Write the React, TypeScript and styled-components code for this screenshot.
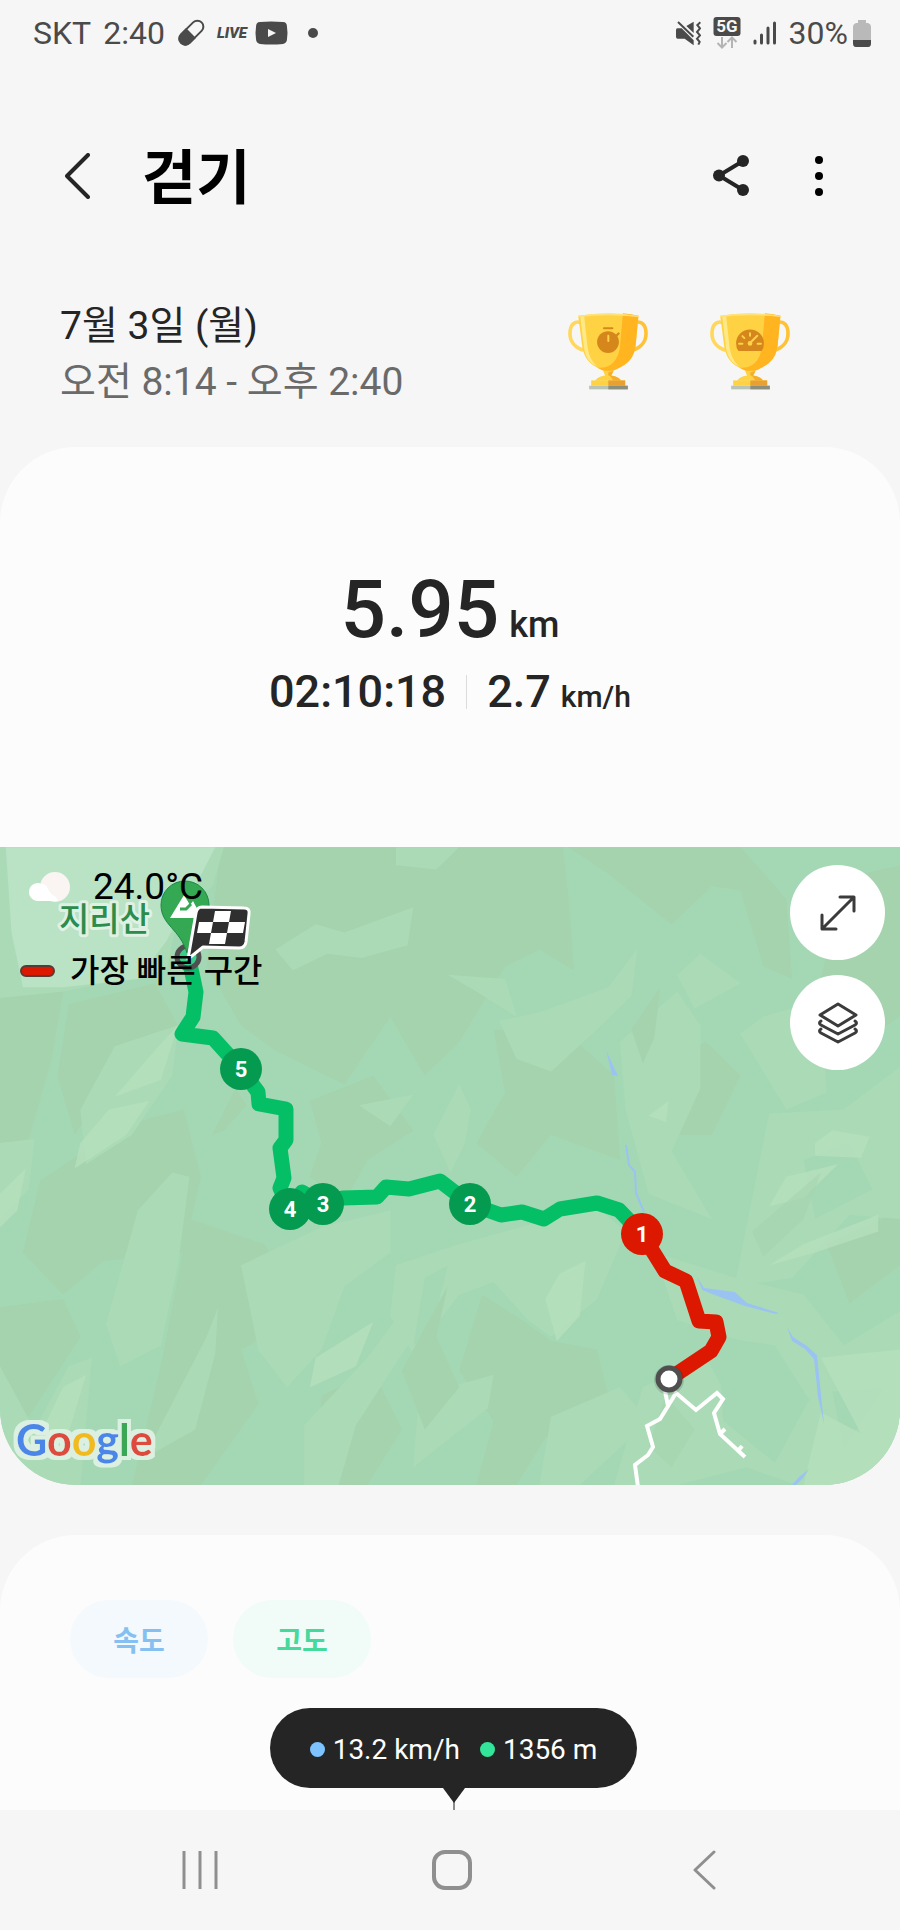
import React from 'react';
import styled, { createGlobalStyle } from 'styled-components';

const ink = '#252525';
const statusInk = '#4a4a4a';
const navInk = '#8f8f8f';

const GlobalStyle = createGlobalStyle`
  *, *::before, *::after { box-sizing: border-box; }
  body {
    margin: 0;
    background: #f6f6f6;
    color: ${ink};
    font-family: Roboto, 'Noto Sans CJK KR', sans-serif;
  }
  h1, p { margin: 0; }
  svg { display: block; flex: none; }
`;

const Screen = styled.div`
  display: flex;
  flex-direction: column;
  min-height: 100vh;
`;

const StatusBar = styled.div`
  display: flex;
  align-items: center;
  justify-content: space-between;
  height: 66px;
  padding: 0 29px 0 33px;
  color: ${statusInk};
  font-size: 32px;
  line-height: 40px;
`;

const StatusGroup = styled.div<{ $gap: number }>`
  display: flex;
  align-items: center;
  gap: ${(p) => p.$gap}px;
`;

const LiveTag = styled.span`
  font-size: 15px;
  font-weight: 900;
  font-style: italic;
  line-height: 20px;
`;

const MoreDot = styled.span`
  width: 10px;
  height: 10px;
  margin-left: 8px;
  border-radius: 50%;
  background: ${statusInk};
`;

const Header = styled.header`
  display: flex;
  align-items: center;
  height: 144px;
  margin-top: 38px;
  padding: 0 57px 0 53px;
`;

const IconButton = styled.button`
  display: flex;
  align-items: center;
  justify-content: center;
  width: 48px;
  height: 56px;
  padding: 0;
  border: 0;
  background: none;
  color: inherit;
  cursor: pointer;
`;

const Title = styled.h1`
  flex: 1;
  margin-left: 41px;
  padding-top: 6px;
  color: #000;
  font-size: 59px;
  font-weight: 700;
  line-height: 72px;
`;

const HeaderActions = styled.div`
  display: flex;
  gap: 40px;
`;

const SessionInfo = styled.section`
  display: flex;
  align-items: flex-start;
  justify-content: space-between;
  margin-top: 50px;
  padding: 0 110px 37px 60px;
`;

const InfoLine = styled.p<{ $muted?: boolean }>`
  color: ${(p) => (p.$muted ? '#6a6a6a' : ink)};
  font-size: 39px;
  line-height: 56px;
`;

const Trophies = styled.div`
  display: flex;
  gap: 62px;
  padding-top: 13px;
`;

const Card = styled.section`
  overflow: hidden;
  border-radius: 76px;
  background: #fcfcfc;
`;

const Summary = styled.div`
  display: flex;
  flex-direction: column;
  align-items: center;
  gap: 12px;
  padding: 119px 24px 129px;
  font-weight: 500;
`;

const Distance = styled.p`
  font-size: 80px;
  line-height: 88px;
`;

const MetricRow = styled.div`
  display: flex;
  align-items: center;
  gap: 20px;
  font-size: 45px;
  line-height: 52px;
`;

const Unit = styled.span<{ $size: number }>`
  margin-left: 10px;
  font-size: ${(p) => p.$size}px;
  line-height: 1;
`;

const Divider = styled.span`
  width: 1px;
  height: 34px;
  background: #dcdcdc;
`;

const MapPanel = styled.div`
  position: relative;
  height: 638px;
  overflow: hidden;
  background: #a4d8b5;
`;

const MapDrawing = styled.svg`
  width: 100%;
  height: 100%;
`;

const MapOverlay = styled.div`
  position: absolute;
  top: 18px;
  left: 20px;
  color: #000;
`;

const Weather = styled.div`
  display: flex;
  align-items: center;
  gap: 23px;
  height: 44px;
  padding-left: 7px;
  font-size: 37px;
  line-height: 36px;
`;

const Legend = styled.div`
  display: flex;
  align-items: center;
  gap: 15px;
  margin-top: 40px;
  font-size: 32px;
  font-weight: 500;
  line-height: 44px;
`;

const LegendSwatch = styled.span`
  width: 35px;
  height: 12px;
  border: 2px solid #5a3a34;
  border-radius: 6px;
  background: #dc1900;
`;

const MapControls = styled.div`
  position: absolute;
  top: 18px;
  right: 15px;
  display: flex;
  flex-direction: column;
  gap: 15px;
`;

const RoundButton = styled.button`
  display: flex;
  align-items: center;
  justify-content: center;
  width: 95px;
  height: 95px;
  padding: 0;
  border: 0;
  border-radius: 50%;
  background: #fff;
  cursor: pointer;
`;

const ChartCard = styled.section`
  display: flex;
  flex: 1;
  flex-direction: column;
  margin-top: 50px;
  padding-top: 65px;
  border-radius: 76px 76px 0 0;
  background: #fcfcfc;
`;

const Chips = styled.div`
  display: flex;
  gap: 25px;
  padding: 0 70px;
`;

const Chip = styled.button<{ $color: string; $tint: string }>`
  width: 138px;
  height: 78px;
  padding: 0;
  border: 0;
  border-radius: 39px;
  background: ${(p) => p.$tint};
  color: ${(p) => p.$color};
  font-family: inherit;
  font-size: 28px;
  font-weight: 700;
  cursor: pointer;
`;

const CursorMark = styled.div`
  display: flex;
  flex-direction: column;
  align-items: center;
  margin-top: 30px;
  padding-left: 7px;
`;

const Tooltip = styled.div`
  display: flex;
  align-items: center;
  gap: 20px;
  height: 80px;
  padding: 3px 40px 0;
  border-radius: 40px;
  background: ${ink};
  color: #fff;
  font-size: 28px;
  line-height: 32px;
`;

const Reading = styled.span<{ $dot: string }>`
  display: flex;
  align-items: center;
  gap: 8px;

  &::before {
    content: '';
    width: 15px;
    height: 15px;
    border-radius: 50%;
    background: ${(p) => p.$dot};
  }
`;

const NavBar = styled.nav`
  display: grid;
  grid-template-columns: repeat(3, 1fr);
  justify-items: center;
  align-items: center;
  height: 120px;
  padding: 0 70px 0 74px;
  color: ${navInk};
`;

const PillIcon = () => (
  <svg width="28" height="28" viewBox="0 0 28 28">
    <g transform="rotate(45 14 14)">
      <rect x="8" y="-1" width="12" height="29" rx="6" fill="none" stroke={statusInk} strokeWidth="2" />
      <path d="M7 14h14v8a7 7 0 0 1-14 0z" fill={statusInk} />
    </g>
  </svg>
);

const VideoIcon = () => (
  <svg width="33" height="24" viewBox="0 0 33 24">
    <path d="M5 1Q16 0 28 1Q32 1 32 6Q33 12 32 18Q32 22 28 23Q16 24 5 23Q1 22 1 18Q0 12 1 6Q1 1 5 1z" fill={statusInk} />
    <path d="M13 8l8 4-8 4z" fill="#f6f6f6" />
  </svg>
);

const MuteIcon = () => (
  <svg width="25" height="25" viewBox="0 0 75 75">
    <path d="M4 22H17L53 58V73L26 53H5Q0 53 0 47V28Q0 22 4 22zM31 15L53 2V36z" fill={statusInk} />
    <path d="M6 3L52 47" stroke={statusInk} strokeWidth="6" />
    <path d="M73 4l-9 8 8 10-9 11 9 10-9 10 8 10-4 8" fill="none" stroke={statusInk} strokeWidth="6" />
  </svg>
);

const NetworkIcon = () => (
  <svg width="28" height="32" viewBox="0 0 28 32">
    <rect x="0.500" y="0" width="27" height="19" rx="3" fill={statusInk} />
    <text x="14" y="15" textAnchor="middle" fontSize="17" fontWeight="700" fill="#f6f6f6">5G</text>
    <path d="M9 20v10M4.500 26L9 30.500 13.500 26M19 31V21M14.500 25L19 20.500 23.500 25" fill="none" stroke="#b4b4b4" strokeWidth="2" />
  </svg>
);

const SignalIcon = () => (
  <svg width="24" height="26" viewBox="0 0 24 26" stroke={statusInk} strokeWidth="3" strokeLinecap="round">
    <path d="M2 21v2M8.500 15v8M15 8v15M21.500 3v20" />
  </svg>
);

const BatteryIcon = () => (
  <svg width="18" height="27" viewBox="0 0 18 27">
    <path d="M5 0h8v3h2q3 1 3 4v16q0 4-3 4H3q-3 0-3-4V7q0-3 3-4h2z" fill="#b9b9b9" />
    <path d="M0 20h18v3q0 4-3 4H3q-3 0-3-4z" fill={statusInk} />
  </svg>
);

const Chevron = ({ width, height, stroke }: { width: number; height: number; stroke: number }) => (
  <svg width={width} height={height} viewBox={`0 0 ${width} ${height}`}>
    <path
      d={`M${width - 2} 2L2 ${height / 2}L${width - 2} ${height - 2}`}
      fill="none"
      stroke="currentColor"
      strokeWidth={stroke}
      strokeLinecap="round"
      strokeLinejoin="round"
    />
  </svg>
);

const ShareIcon = () => (
  <svg width="36" height="42" viewBox="0 0 36 42">
    <path d="M30 6L6 20.500L30 35" fill="none" stroke={ink} strokeWidth="4" />
    <circle cx="30" cy="6" r="6" fill={ink} />
    <circle cx="6" cy="20.500" r="6" fill={ink} />
    <circle cx="30" cy="35" r="6" fill={ink} />
  </svg>
);

const MoreIcon = () => (
  <svg width="8" height="40" viewBox="0 0 8 40">
    <circle cx="4" cy="4" r="4" />
    <circle cx="4" cy="20" r="4" />
    <circle cx="4" cy="36" r="4" />
  </svg>
);

const StopwatchMark = () => (
  <g>
    <rect x="106" y="49" width="31" height="6" rx="2" fill="#d5871c" />
    <path d="M144 77l9-9" stroke="#d5871c" strokeWidth="7" strokeLinecap="round" />
    <circle cx="121" cy="94" r="33" fill="#d5871c" />
    <path d="M122 75v16" stroke="#ffd24a" strokeWidth="6" strokeLinecap="round" />
  </g>
);

const GaugeMark = () => (
  <g>
    <path d="M86 121Q79 113 79 98A42 42 0 0 1 163 98Q163 113 156 121z" fill="#d5871c" />
    <path d="M121 67v8M98 76l6 6M88 99h10M144 99h10M121 97l22-22" stroke="#ffd24a" strokeWidth="6" strokeLinecap="round" />
    <circle cx="121" cy="98" r="7" fill="#ffd24a" />
  </g>
);

const Trophy = ({ label, children }: { label: string; children: React.ReactNode }) => (
  <svg width="80" height="80" viewBox="0 0 242 242" role="img" aria-label={label}>
    <path d="M38 35C18 28 6 45 6 68C6 94 24 112 48 119" fill="none" stroke="#ffd75c" strokeWidth="11" />
    <path d="M204 35C224 28 236 45 236 68C236 94 218 112 194 119" fill="none" stroke="#ffc234" strokeWidth="11" />
    <path d="M31 14Q122 1 213 14L205 100C201 150 172 168 122 186C72 168 48 150 42 100z" fill="#ffd244" />
    <path d="M166 7Q192 9 213 14L205 100C201 150 172 168 122 186Q104 180 88 171C134 178 156 140 158 100z" fill="#ffb420" />
    <path d="M37 17L49 15L58 100C61 130 68 148 88 168C58 154 50 130 47 100z" fill="#ffe886" />
    <path d="M31 14Q122 1 213 14L213 18Q122 7 31 18z" fill="#ffe27c" />
    <path d="M106 181h32l-6 14q24 4 29 16H82q6-12 30-16z" fill="#ffd244" />
    <path d="M122 186l16-5-8 14q24 4 31 16h-24q-8-16-15-16z" fill="#f5ad2c" />
    <rect x="70" y="210" width="103" height="16" fill="#ffd244" />
    <rect x="122" y="210" width="51" height="16" fill="#e8a034" />
    <rect x="64" y="226" width="117" height="11" fill="#b9c3b6" />
    <rect x="122" y="226" width="59" height="11" fill="#8b8f7c" />
    {children}
  </svg>
);

const CloudIcon = () => (
  <svg width="43" height="30" viewBox="0 0 43 30">
    <circle cx="28" cy="15" r="15" fill="#faf5f2" />
    <path d="M10 29a9 9 0 1 1 5-17q4 0 6 5t8 8l2 4z" fill="#fff" />
  </svg>
);

const ExpandIcon = () => (
  <svg width="36" height="36" viewBox="0 0 36 36" fill="none" stroke="#3b3b3b" strokeWidth="3" strokeLinecap="round" strokeLinejoin="round">
    <path d="M3 33L33 3M20 2H34V16M2 20V34H16" />
  </svg>
);

const LayersIcon = () => (
  <svg width="42" height="42" viewBox="0 0 42 42" fill="none" stroke="#3b3b3b" strokeWidth="3" strokeLinejoin="round" strokeLinecap="round">
    <path d="M21 2L39 13L21 24L3 13z" />
    <path d="M4 19q-3 2 0 4L21 32L38 23q3-2 0-4" />
    <path d="M4 27q-3 2 0 4L21 40L38 31q3-2 0-4" />
  </svg>
);

const kmMarkers = [
  { n: 5, x: 241, y: 222, color: '#049b51' },
  { n: 4, x: 290, y: 362, color: '#049b51' },
  { n: 3, x: 323, y: 357, color: '#049b51' },
  { n: 2, x: 470, y: 357, color: '#049b51' },
  { n: 1, x: 642, y: 387, color: '#dc1900' },
];

const shade = '#a4d3ad';
const meadow = '#abdbb6';
const light = '#b6e0bd';
const water = '#9bc3f2';

const Terrain = () => (
  <g transform="translate(0 -7) scale(.574 .421)">
    <g fill={shade}>
      <path d="M385 17H980L990 130 1000 310 940 260 880 300 800 480 740 560 680 420 600 580 480 500 420 440 360 300z" />
      <path d="M990 17H1290L1370 140 1380 330 1330 300 1290 120 1240 110 1170 200 1060 80z" />
      <path d="M0 370L110 360 90 520 40 760 0 800z" />
      <path d="M120 390L270 340 310 440 220 520 130 700 100 560z" />
      <path d="M540 620L650 560 720 690 640 760 600 860 540 800 560 720z" />
      <path d="M860 450L990 460 1070 560 1080 760 960 700 900 800 830 720 880 600z" />
      <path d="M70 810L210 680 320 640 350 800 320 980 180 1000 110 1080 40 980z" />
      <path d="M330 900L460 960 540 1120 420 1210 450 1340 350 1532H230L280 1250z" />
      <path d="M840 1080L920 1150 960 1190 1040 1210 1070 1380 950 1420 900 1532H830L860 1380 800 1260z" />
      <path d="M560 1320L650 1260 700 1400 640 1532H550z" />
      <path d="M0 1110L110 1090 140 1180 50 1370 0 1330z" />
      <path d="M1130 540L1230 480 1290 560 1240 700 1170 700z" />
      <path d="M1470 90L1568 60V420L1500 480 1430 330z" />
      <path d="M1440 960L1568 880V1010L1480 1100z" />
    </g>
    <g fill={meadow}>
      <path d="M0 17H390L370 110 310 180 290 310 110 360 0 375z" />
      <path d="M480 260L550 200 600 220 720 160 710 250 630 280 570 270 510 310z" />
      <path d="M690 17H800L760 70 690 60z" />
      <path d="M870 430L940 410 1060 350 1110 260 1100 370 1040 450 960 550 900 520z" />
      <path d="M1080 480L1180 360 1220 440 1220 590 1170 740 1240 900 1130 840 1090 640z" />
      <path d="M1180 320L1220 270 1290 340 1210 400z" />
      <path d="M780 320L880 330 900 420 830 360z" />
      <path d="M200 490L310 440 300 560 230 700 150 770 140 640z" />
      <path d="M625 630L720 605 680 680z" />
      <path d="M755 700L800 580 820 640 810 720 785 790z" />
      <path d="M0 720L60 710 50 830 0 900z" />
      <path d="M240 880L300 790 330 800 310 1010 280 1200 210 1250 185 1150z" />
      <path d="M420 1010L560 920 680 880 680 980 600 1060 560 1210 500 1300 450 1210z" />
      <path d="M690 1010L800 960 960 900 1030 860 1090 930 1040 1090 960 1180 920 1140 860 1050 800 1080 720 1220 680 1130z" />
      <path d="M0 1250L60 1400 120 1250 160 1230 140 1532H0z" />
      <path d="M360 1180L380 1110 375 1220 340 1400 250 1470z" />
      <path d="M530 1390L640 1230 700 1120 720 1180 620 1390 590 1532 530 1532z" />
      <path d="M730 1320L860 1270 850 1350 720 1490z" />
      <path d="M1280 1060L1340 650 1470 640 1568 540V900L1480 890 1380 1040z" />
      <path d="M1330 420L1430 380 1440 600 1370 640 1290 460z" />
      <path d="M1140 980L1280 1040 1400 1080 1470 1200 1568 1120V1532H1390L1300 1490 1180 1532 1070 1532 1120 1300 1230 1230 1290 1380 1350 1310 1290 1190 1180 1140z" />
      <path d="M960 1370L1080 1300 1130 1380 1010 1532H940z" />
    </g>
    <g fill="#a4d8b5">
      <path d="M1250 1180L1350 1200 1410 1330 1350 1480 1260 1380z" />
      <path d="M1400 760L1480 720 1520 830 1420 900z" />
      <path d="M1450 1310L1540 1300 1470 1450z" />
      <path d="M740 1040L780 1010 750 1180 720 1200z" />
      <path d="M20 150L60 50 90 190 60 280z" opacity=".5" />
    </g>
    <path d="M10 17H375L340 110 290 240 240 330 110 350 40 350 20 220z" fill="#bae2c4" />
    <g fill={light} opacity=".8">
      <path d="M140 720L190 640 260 620 220 700 130 780z" />
      <path d="M270 500L310 440 280 570 200 610z" />
      <path d="M1420 720L1450 690 1515 705 1500 755 1420 750z" />
      <path d="M1340 870L1370 800 1460 770 1400 850z" />
      <path d="M1340 1010L1400 960 1530 890 1530 930 1420 980z" />
      <path d="M950 1090L975 1030 1020 1000 1010 1130 970 1190z" />
      <path d="M550 1230L650 1145 620 1250 540 1300z" />
      <path d="M1430 1230L1568 1210V1532H1400L1430 1360 1500 1410z" />
      <path d="M1130 655L1165 620 1160 670z" />
      <path d="M60 1440L110 1300 150 1270 110 1450z" />
      <path d="M0 840L45 780 30 880 0 920z" />
    </g>
    <g fill={shade}>
      <path d="M700 1260L780 1060 760 1180 800 1300 740 1400z" />
      <path d="M370 700L410 590 430 630 390 690z" />
      <path d="M1310 930L1430 790 1400 900 1330 990z" opacity=".5" />
      <path d="M1100 450L1150 350 1140 470 1120 530z" />
      <path d="M1160 1320L1210 1400 1170 1490 1130 1440z" opacity=".6" />
    </g>
  </g>
);

const RouteMap = () => (
  <MapDrawing viewBox="0 0 900 638" preserveAspectRatio="xMidYMid slice" role="img" aria-label="지리산">
    <defs>
      <filter id="logo-halo" x="-10%" y="-20%" width="120%" height="140%">
        <feMorphology in="SourceAlpha" operator="dilate" radius="4" result="grown" />
        <feFlood floodColor="#dcf0e2" />
        <feComposite in2="grown" operator="in" result="halo" />
        <feMerge>
          <feMergeNode in="halo" />
          <feMergeNode in="SourceGraphic" />
        </feMerge>
      </filter>
    </defs>
    <Terrain />
    <g fill={water}>
      <path d="M606 203L618 229L612 228z" />
      <path d="M697 430L704 441L735 445L747 456L779 466L776 467L745 459L720 450L702 443z" />
      <path d="M787 480L793 490L807 499L817 508L824 577L818 550L814 512L805 502L792 494z" />
      <path d="M792 638L799 630L809 622L803 631L796 638z" />
    </g>
    <path d="M626 298l3 20 6 7 1 21 8 19" fill="none" stroke={water} strokeWidth="2" />
    <g fill="none" stroke="#fff" strokeWidth="4">
      <path d="M665 544l3 15-8 13-13 7 6 21-5 8-13 10 3 22" />
      <path d="M668 559l8-13 20 17 21-17 6 6-9 14 6 21 25 23M720 587l5-5M738 604l4-5" />
    </g>
    <g fill="none" strokeWidth="15" strokeLinejoin="round" strokeLinecap="round">
      <path
        d="M188 110L192 126L196 145L193 170L182 187L213 191L241 222L258 245L259 257L286 262V293L280 301L284 331L280 341L290 362L302 345L324 357L343 351L377 350L386 340L409 342L440 334L470 357L501 368L522 365L544 372L560 362L597 356L619 363L642 387"
        stroke="#04bf66"
      />
      <path d="M642 387L665 424L686 434L699 474L716 475L719 490L711 504L669 532" stroke="#dc1900" />
    </g>
    <circle cx="669" cy="533" r="15" fill="#000" opacity=".12" />
    <circle cx="669" cy="532" r="11" fill="#fff" stroke="#4f4f4f" strokeWidth="5" />
    <circle cx="188" cy="110" r="11" fill="#38cf8c" stroke="#4f4f4f" strokeWidth="5" />
    <path d="M185 34a24 24 0 0 1 24 24c0 20-15 22-22 48c-7-24-26-28-26-48a24 24 0 0 1 24-24z" fill="#34a853" stroke="#1c8a45" strokeWidth="1" />
    <path d="M170 71L184 48L190 58L193 54L202 71z" fill="#fff" />
    <path d="M180 62h6l5-5" fill="none" stroke="#34a853" strokeWidth="3" />
    <path
      d="M202 60L244 61Q250 61 249 67L246 95Q245 101 239 101L203 100L188 112L196 66Q197 60 202 60z"
      fill="#2f2f2f"
      stroke="#fff"
      strokeWidth="3"
      strokeLinejoin="round"
    />
    <path d="M215 64h16l-2 11h-16zM199 75h14l-2 11h-14zM229 75h16l-2 11h-16zM211 86h16l-2 11h-16z" fill="#fff" />
    <text x="59" y="84" fontSize="33" fontWeight="500" fill="#2b8c4c" stroke="#dff1e3" strokeWidth="6" strokeLinejoin="round" paintOrder="stroke">
      지리산
    </text>
    {kmMarkers.map((m) => (
      <g key={m.n}>
        <circle cx={m.x} cy={m.y} r="21" fill={m.color} />
        <text x={m.x} y={m.y + 8} textAnchor="middle" fontSize="22" fontWeight="700" fill="#fff">
          {m.n}
        </text>
      </g>
    ))}
    <text x="16" y="609" fontFamily="Lato" fontSize="43" fontWeight="700" filter="url(#logo-halo)" aria-label="Google">
      <tspan fill="#4a86e8">G</tspan>
      <tspan fill="#dc4b3e">o</tspan>
      <tspan fill="#f0bb1f">o</tspan>
      <tspan fill="#4a86e8">g</tspan>
      <tspan fill="#3aa757">l</tspan>
      <tspan fill="#dc4b3e">e</tspan>
    </text>
  </MapDrawing>
);

export default function App() {
  return (
    <Screen>
      <GlobalStyle />
      <StatusBar>
        <StatusGroup $gap={12}>
          <span>SKT</span>
          <span>2:40</span>
          <PillIcon />
          <StatusGroup $gap={8}>
            <LiveTag>LIVE</LiveTag>
            <VideoIcon />
          </StatusGroup>
          <MoreDot />
        </StatusGroup>
        <StatusGroup $gap={12}>
          <MuteIcon />
          <NetworkIcon />
          <SignalIcon />
          <StatusGroup $gap={5}>
            <span>30%</span>
            <BatteryIcon />
          </StatusGroup>
        </StatusGroup>
      </StatusBar>

      <Header>
        <IconButton aria-label="뒤로">
          <Chevron width={25} height={46} stroke={4} />
        </IconButton>
        <Title>걷기</Title>
        <HeaderActions>
          <IconButton aria-label="공유">
            <ShareIcon />
          </IconButton>
          <IconButton aria-label="더보기">
            <MoreIcon />
          </IconButton>
        </HeaderActions>
      </Header>

      <SessionInfo>
        <div>
          <InfoLine>7월 3일 (월)</InfoLine>
          <InfoLine $muted>오전 8:14 - 오후 2:40</InfoLine>
        </div>
        <Trophies>
          <Trophy label="시간">
            <StopwatchMark />
          </Trophy>
          <Trophy label="속도">
            <GaugeMark />
          </Trophy>
        </Trophies>
      </SessionInfo>

      <Card>
        <Summary>
          <Distance>
            5.95<Unit $size={36}>km</Unit>
          </Distance>
          <MetricRow>
            <span>02:10:18</span>
            <Divider />
            <span>
              2.7<Unit $size={30}>km/h</Unit>
            </span>
          </MetricRow>
        </Summary>
        <MapPanel>
          <RouteMap />
          <MapOverlay>
            <Weather>
              <CloudIcon />
              <span>24.0°C</span>
            </Weather>
            <Legend>
              <LegendSwatch />
              <span>가장 빠른 구간</span>
            </Legend>
          </MapOverlay>
          <MapControls>
            <RoundButton aria-label="지도 확대">
              <ExpandIcon />
            </RoundButton>
            <RoundButton aria-label="지도 유형">
              <LayersIcon />
            </RoundButton>
          </MapControls>
        </MapPanel>
      </Card>

      <ChartCard>
        <Chips>
          <Chip $color="#86c0f0" $tint="#f4f9fd">속도</Chip>
          <Chip $color="#45d99b" $tint="#f1fcf8">고도</Chip>
        </Chips>
        <CursorMark>
          <Tooltip>
            <Reading $dot="#7cc3ff">13.2 km/h</Reading>
            <Reading $dot="#33e59b">1356 m</Reading>
          </Tooltip>
          <svg width="24" height="22" viewBox="0 0 24 22">
            <path d="M12 13v9" stroke="#8c8c8c" strokeWidth="2" />
            <path d="M1 0h22L12 15z" fill={ink} />
          </svg>
        </CursorMark>
      </ChartCard>

      <NavBar>
        <IconButton aria-label="최근 앱">
          <svg width="36" height="38" viewBox="0 0 36 38">
            <path d="M2 0v38M18 0v38M34 0v38" stroke={navInk} strokeWidth="3" />
          </svg>
        </IconButton>
        <IconButton aria-label="홈">
          <svg width="40" height="40" viewBox="0 0 40 40">
            <rect x="2" y="2" width="36" height="36" rx="11" fill="none" stroke={navInk} strokeWidth="4" />
          </svg>
        </IconButton>
        <IconButton aria-label="이전">
          <Chevron width={23} height={40} stroke={3} />
        </IconButton>
      </NavBar>
    </Screen>
  );
}
